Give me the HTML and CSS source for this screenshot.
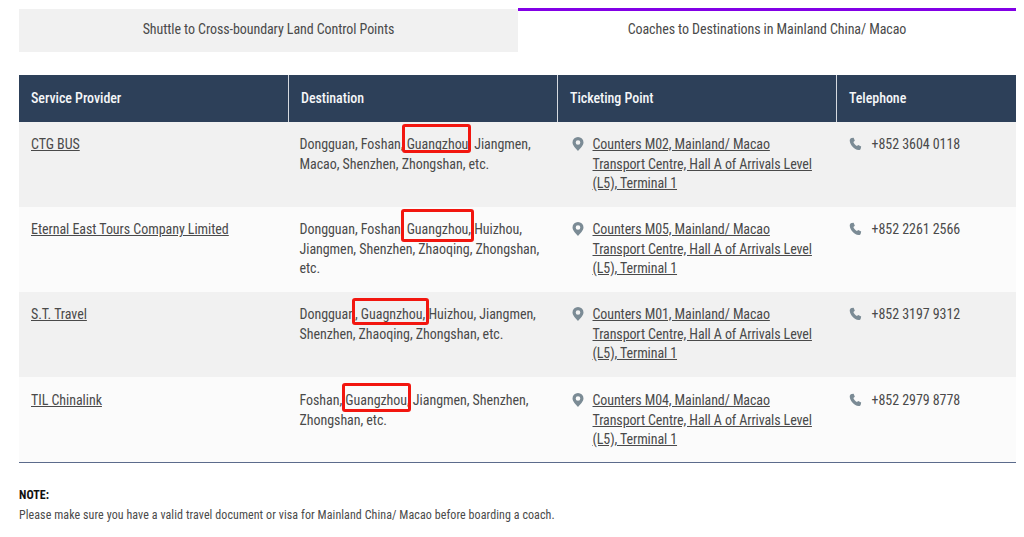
FILE: index.html
```html
<!DOCTYPE html>
<html lang="en">
<head>
<meta charset="utf-8">
<title>Coaches to Destinations in Mainland China/ Macao</title>
<link rel="stylesheet" href="styles.css">
</head>
<body>
<main class="page">
  <div class="tabs">
    <div class="tab">Shuttle to Cross-boundary Land Control Points</div>
    <div class="tab tab-active">Coaches to Destinations in Mainland China/ Macao</div>
  </div>
  <table class="coaches">
    <colgroup>
      <col class="col-provider"><col class="col-dest"><col class="col-point"><col class="col-tel">
    </colgroup>
    <thead>
      <tr><th>Service Provider</th><th>Destination</th><th>Ticketing Point</th><th>Telephone</th></tr>
    </thead>
    <tbody>
      <tr>
        <td><a href="#">CTG BUS</a></td>
        <td class="dest">Dongguan, Foshan, Guangzhou, Jiangmen, Macao, Shenzhen, Zhongshan, etc.<span class="mark mark-1"></span></td>
        <td><div class="with-icon"><svg class="icon" viewBox="0 0 12 14"><path fill-rule="evenodd" d="M6 0A5.500 5.500 0 0 0 .5 5.500C.5 8.300 3.900 11.700 6 14c2.100-2.300 5.500-5.700 5.500-8.500A5.500 5.500 0 0 0 6 0Zm0 3.200a2.300 2.300 0 1 1 0 4.600 2.300 2.300 0 0 1 0-4.600Z"/></svg><a class="point" href="#">Counters M02, Mainland/ Macao Transport Centre, Hall A of Arrivals Level (L5), Terminal 1</a></div></td>
        <td><div class="with-icon"><svg class="icon phone" viewBox="0 0 16 16"><path d="M3.200.7 5.700.2l1.500 3.900-1.800 1.500c.7 2 2.300 3.900 4.300 5l1.700-1.500 3.600 1.900-.6 2.700c-.3 1.200-1.300 2-2.500 1.800C6.200 14.600 1.500 9.400.9 3.900.8 2.400 1.800 1 3.200.7Z"/></svg><span>+852 3604 0118</span></div></td>
      </tr>
      <tr>
        <td><a href="#">Eternal East Tours Company Limited</a></td>
        <td class="dest">Dongguan, Foshan, Guangzhou, Huizhou, Jiangmen, Shenzhen, Zhaoqing, Zhongshan, etc.<span class="mark mark-2"></span></td>
        <td><div class="with-icon"><svg class="icon" viewBox="0 0 12 14"><path fill-rule="evenodd" d="M6 0A5.500 5.500 0 0 0 .5 5.500C.5 8.300 3.900 11.700 6 14c2.100-2.300 5.500-5.700 5.500-8.500A5.500 5.500 0 0 0 6 0Zm0 3.200a2.300 2.300 0 1 1 0 4.600 2.300 2.300 0 0 1 0-4.600Z"/></svg><a class="point" href="#">Counters M05, Mainland/ Macao Transport Centre, Hall A of Arrivals Level (L5), Terminal 1</a></div></td>
        <td><div class="with-icon"><svg class="icon phone" viewBox="0 0 16 16"><path d="M3.200.7 5.700.2l1.500 3.900-1.800 1.500c.7 2 2.300 3.900 4.300 5l1.700-1.500 3.600 1.900-.6 2.700c-.3 1.200-1.300 2-2.500 1.800C6.200 14.600 1.500 9.400.9 3.900.8 2.400 1.800 1 3.200.7Z"/></svg><span>+852 2261 2566</span></div></td>
      </tr>
      <tr>
        <td><a href="#">S.T. Travel</a></td>
        <td class="dest">Dongguan, Guagnzhou, Huizhou, Jiangmen, Shenzhen, Zhaoqing, Zhongshan, etc.<span class="mark mark-3"></span></td>
        <td><div class="with-icon"><svg class="icon" viewBox="0 0 12 14"><path fill-rule="evenodd" d="M6 0A5.500 5.500 0 0 0 .5 5.500C.5 8.300 3.900 11.700 6 14c2.100-2.300 5.500-5.700 5.500-8.500A5.500 5.500 0 0 0 6 0Zm0 3.200a2.300 2.300 0 1 1 0 4.600 2.300 2.300 0 0 1 0-4.600Z"/></svg><a class="point" href="#">Counters M01, Mainland/ Macao Transport Centre, Hall A of Arrivals Level (L5), Terminal 1</a></div></td>
        <td><div class="with-icon"><svg class="icon phone" viewBox="0 0 16 16"><path d="M3.200.7 5.700.2l1.500 3.900-1.800 1.500c.7 2 2.300 3.900 4.300 5l1.700-1.500 3.600 1.900-.6 2.700c-.3 1.200-1.300 2-2.500 1.800C6.200 14.600 1.500 9.400.9 3.900.8 2.400 1.800 1 3.200.7Z"/></svg><span>+852 3197 9312</span></div></td>
      </tr>
      <tr>
        <td><a href="#">TIL Chinalink</a></td>
        <td class="dest">Foshan, Guangzhou, Jiangmen, Shenzhen, Zhongshan, etc.<span class="mark mark-4"></span></td>
        <td><div class="with-icon"><svg class="icon" viewBox="0 0 12 14"><path fill-rule="evenodd" d="M6 0A5.500 5.500 0 0 0 .5 5.500C.5 8.300 3.900 11.700 6 14c2.100-2.300 5.500-5.700 5.500-8.500A5.500 5.500 0 0 0 6 0Zm0 3.200a2.300 2.300 0 1 1 0 4.600 2.300 2.300 0 0 1 0-4.600Z"/></svg><a class="point" href="#">Counters M04, Mainland/ Macao Transport Centre, Hall A of Arrivals Level (L5), Terminal 1</a></div></td>
        <td><div class="with-icon"><svg class="icon phone" viewBox="0 0 16 16"><path d="M3.200.7 5.700.2l1.500 3.900-1.800 1.500c.7 2 2.300 3.900 4.300 5l1.700-1.500 3.600 1.900-.6 2.700c-.3 1.200-1.300 2-2.500 1.800C6.200 14.600 1.500 9.400.9 3.900.8 2.400 1.800 1 3.200.7Z"/></svg><span>+852 2979 8778</span></div></td>
      </tr>
    </tbody>
  </table>
  <section class="note">
    <h2>NOTE:</h2>
    <p>Please make sure you have a valid travel document or visa for Mainland China/ Macao before boarding a coach.</p>
  </section>
</main>
</body>
</html>
```
FILE: styles.css
```css
* { box-sizing: border-box; }
html, body { margin: 0; background: #fff; }
body { font-family: Roboto, "Liberation Sans", sans-serif; font-stretch: 87%; letter-spacing: -0.05px; color: #4a4a4a; font-size: 14px; line-height: 19.6px; overflow: hidden; }
.page { width: 997px; margin-left: 19px; padding-top: 8px; }
.tabs { display: flex; height: 44px; }
.tab { width: 499px; margin-top: 1px; display: flex; align-items: center; justify-content: center; background: #f1f1f1; padding-bottom: 2px; letter-spacing: -0.08px; }
.tab-active { width: 498px; margin-top: 0; background: #fff; border-top: 3px solid #8200e6; padding-bottom: 4px; }
.coaches { width: 997px; margin-top: 23px; border-collapse: collapse; table-layout: fixed; border-bottom: 1px solid #5b6b8c; }
.col-provider { width: 269.500px; }
.col-dest { width: 269px; }
.col-point { width: 279px; }
.col-tel { width: 179.500px; }
th { height: 47px; background: #2d4059; color: #f4f6f8; font-weight: 500; text-align: left; padding: 0 12px; border-left: 1px solid #d5dae0; }
th:first-child { border-left: 0; }
td { padding: 13px 12px 12px; height: 85px; vertical-align: top; position: relative; }
td.dest { padding-left: 11px; }
tbody tr:nth-child(4) td { padding-top: 14px; padding-bottom: 11px; }
tbody tr:nth-child(odd) td { background: #f1f1f1; }
tbody tr:nth-child(even) td { background: #fbfbfb; }
a { color: inherit; text-decoration: underline; }
.point { letter-spacing: -0.1px; }
.with-icon { display: flex; }
.icon { width: 12px; height: 14px; flex: none; margin: 2px 9px 0 2px; fill: #7b8b95; }
.phone { width: 13px; margin: 2px 10px 0 0; }
.mark { position: absolute; border: 3px solid #f2160f; border-radius: 3px; }
.mark-1 { left: 113.500px; top: 2px; width: 69px; height: 29px; }
.mark-2 { left: 112px; top: 2px; width: 73px; height: 33px; }
.mark-3 { left: 63px; top: 6px; width: 77px; height: 27px; }
.mark-4 { left: 53px; top: 6px; width: 69px; height: 29px; }
.note { margin-top: 22px; font-size: 12px; letter-spacing: 0.08px; }
.note h2 { margin: 0; font-size: 12px; font-weight: 700; color: #111; line-height: 20px; }
.note p { margin: 0; line-height: 20px; }
```
